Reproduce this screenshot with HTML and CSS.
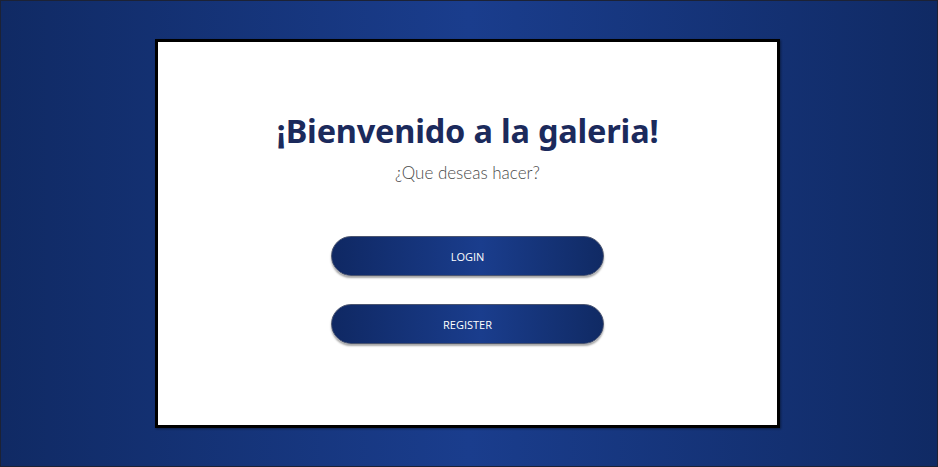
FILE: index.html
```html
<!DOCTYPE html>
<html lang="es">
<head>
<meta charset="utf-8">
<title>Galeria</title>
<link rel="stylesheet" href="styles.css">
</head>
<body>
<main class="page">
  <section class="card">
    <h1 class="title">¡Bienvenido a la galeria!</h1>
    <p class="subtitle">¿Que deseas hacer?</p>
    <div class="actions">
      <button class="btn">LOGIN</button>
      <button class="btn">REGISTER</button>
    </div>
  </section>
</main>
</body>
</html>
```
FILE: styles.css
```css
* { box-sizing: border-box; }
html, body { margin: 0; padding: 0; height: 100%; }
body {
  font-family: "Noto Sans", "Open Sans", sans-serif;
}
.page {
  height: 467px;
  border: 1px solid #1c2235;
  padding-right: 3px;
  background: linear-gradient(90deg, #102a64 0%, #1a3d8d 50%, #102a64 100%);
  display: flex;
  align-items: center;
  justify-content: center;
}
.card {
  width: 625px;
  height: 389px;
  background: #fff;
  border: 3px solid #000;
  box-shadow: 1px 1px 2px rgba(0,0,0,0.4);
  display: flex;
  flex-direction: column;
  align-items: center;
  padding-top: 65px;
}
.title {
  margin: 0;
  font-size: 32.5px;
  font-weight: 700;
  color: #1b2a5c;
  line-height: 48px;
  letter-spacing: -0.2px;
}
.subtitle {
  margin: 6px 0 0;
  font-family: "Lato", "Open Sans", sans-serif;
  font-size: 17px;
  font-weight: 300;
  color: #4a4a4a;
  line-height: 24px;
}
.actions {
  margin-top: 51px;
  display: flex;
  flex-direction: column;
  gap: 28px;
}
.btn {
  width: 273px;
  height: 40px;
  border-radius: 20px;
  border: 1px solid #4b5570;
  background: linear-gradient(90deg, #0f2863 0%, #1a3d8d 55%, #102a64 100%);
  box-shadow: 0 2px 2px rgba(0,0,0,0.35);
  color: #fff;
  font-family: "Open Sans", "Noto Sans", sans-serif;
  font-size: 11px;
  letter-spacing: 0;
  cursor: pointer;
}
```
